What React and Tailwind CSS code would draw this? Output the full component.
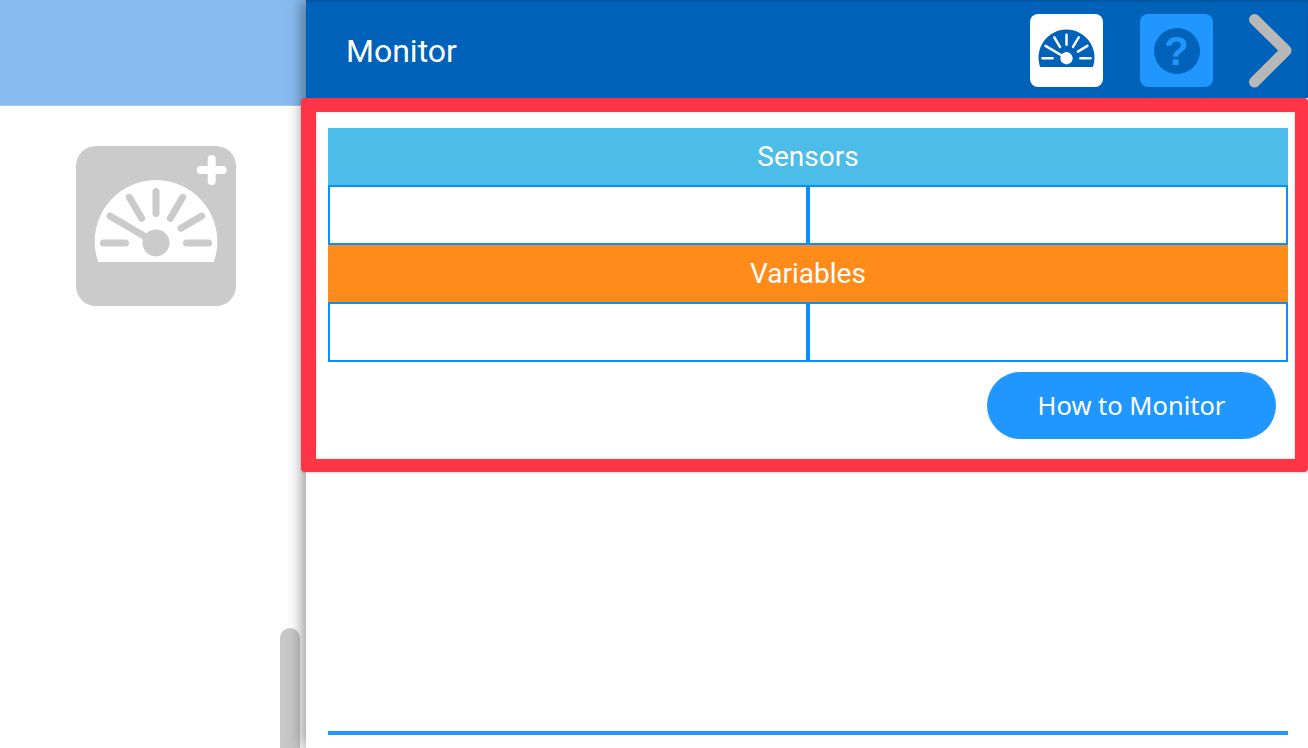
import React from 'react';

// dial drawn on a 160 box, same shape in the big add tile and the small header tile
function Gauge({ dial, marks, tick, plus }) {
  const ticks = [
    [27.5, 97, 49.5, 97],
    [110.5, 97, 132.5, 97],
    [80, 45.5, 80, 67.5],
    [53.3, 51.3, 65.7, 72.3],
    [106.7, 51.3, 94.3, 72.3],
    [125.7, 70, 105, 82.3],
  ];
  return (
    <svg viewBox="0 0 160 160" className="w-full h-full block">
      <path d="M22.3 116 A61.3 61.3 0 1 1 137.7 116 Z" fill={dial} />
      {ticks.map((t, i) => (
        <line key={i} x1={t[0]} y1={t[1]} x2={t[2]} y2={t[3]} stroke={marks} strokeWidth={tick} strokeLinecap="round" />
      ))}
      <line x1="34" y1="70" x2="80" y2="97" stroke={marks} strokeWidth={tick} strokeLinecap="round" />
      <circle cx="80" cy="97" r="13.5" fill={marks} />
      {plus && <path d="M124.7 24H146.7M135.7 13V35" stroke="#fff" strokeWidth="8" strokeLinecap="round" />}
    </svg>
  );
}

function Table() {
  const cell = 'flex-1 h-[60px] border-2 border-[#0a8fff]';
  return (
    <div className="flex flex-col text-white text-[28px] font-[450] leading-none font-['Roboto',sans-serif]">
      <div className="h-[57px] bg-[#4bbde8] flex items-center justify-center">Sensors</div>
      <div className="flex">
        <div className={cell}></div>
        <div className={cell}></div>
      </div>
      <div className="h-[57px] bg-[#ff8c1a] flex items-center justify-center">Variables</div>
      <div className="flex">
        <div className={cell}></div>
        <div className={cell}></div>
      </div>
    </div>
  );
}

export default function App() {
  return (
    <div className="relative flex w-[1308px] h-[748px] overflow-hidden bg-white font-['Roboto',sans-serif]">
      {/* palette side */}
      <div className="relative w-[306px] shrink-0">
        <div className="h-[106px] bg-[#88bcf0] border-b border-[#a9c6e2]"></div>
        <div className="w-40 h-40 mt-10 ml-[76px] rounded-[20px] bg-[#cbcbcb]">
          <Gauge dial="#fff" marks="#cbcbcb" tick={7} plus />
        </div>
        <div className="absolute left-[280px] top-[628px] bottom-0 w-5 rounded-t-[10px] bg-[#c8c8c8]"></div>
      </div>

      {/* monitor panel */}
      <div className="relative flex-1 flex flex-col bg-white shadow-[-4px_0_14px_rgba(0,0,0,0.4)]">
        <div className="h-[98px] shrink-0 bg-[#0062b8] shadow-[inset_0_2px_2px_rgba(0,0,0,0.12)] flex items-center pl-10 pt-[3px] text-white text-[32px] leading-none">
          <span>Monitor</span>
          <div className="ml-auto w-[73px] h-[73px] rounded-lg bg-white">
            <Gauge dial="#0062b8" marks="#fff" tick={5.5} />
          </div>
          <div className="ml-[37px] w-[73px] h-[73px] rounded-lg bg-[#2097ff] flex items-center justify-center">
            <div className="w-[46px] h-[46px] rounded-full bg-[#0062b8] flex items-center justify-center text-[#2097ff] text-[40px] leading-none font-black font-['Liberation_Sans',sans-serif]">?</div>
          </div>
          <svg viewBox="0 0 45 74" className="ml-9 mr-[14px] w-[45px] h-[74px] shrink-0">
            <path d="M5.5 5.5L37 36.5L5.5 68" fill="none" stroke="#b8b8b8" strokeWidth="11" strokeLinecap="round" strokeLinejoin="round" />
          </svg>
        </div>

        <div className="relative -ml-[5px] h-[374px] shrink-0 rounded-[4px] border-t-[14px] border-l-[15px] border-r-[13px] border-b-[13px] border-[#fd3546] bg-white pt-4 pl-3 pr-[7px] shadow-[0_1px_3px_rgba(0,0,0,0.15),inset_0_0_4px_rgba(0,0,0,0.12)]">
          <Table />
          <div className="flex justify-end mt-[10px] pr-[12px]">
            <button className="w-[289px] h-[67px] rounded-full bg-[#2097ff] text-white text-[25.5px] pb-[1px] font-['Noto_Sans',sans-serif]">How to Monitor</button>
          </div>
        </div>

        <div className="mt-[259px] ml-[22px] mr-5 h-1 bg-[#2097ff]"></div>
      </div>
    </div>
  );
}
